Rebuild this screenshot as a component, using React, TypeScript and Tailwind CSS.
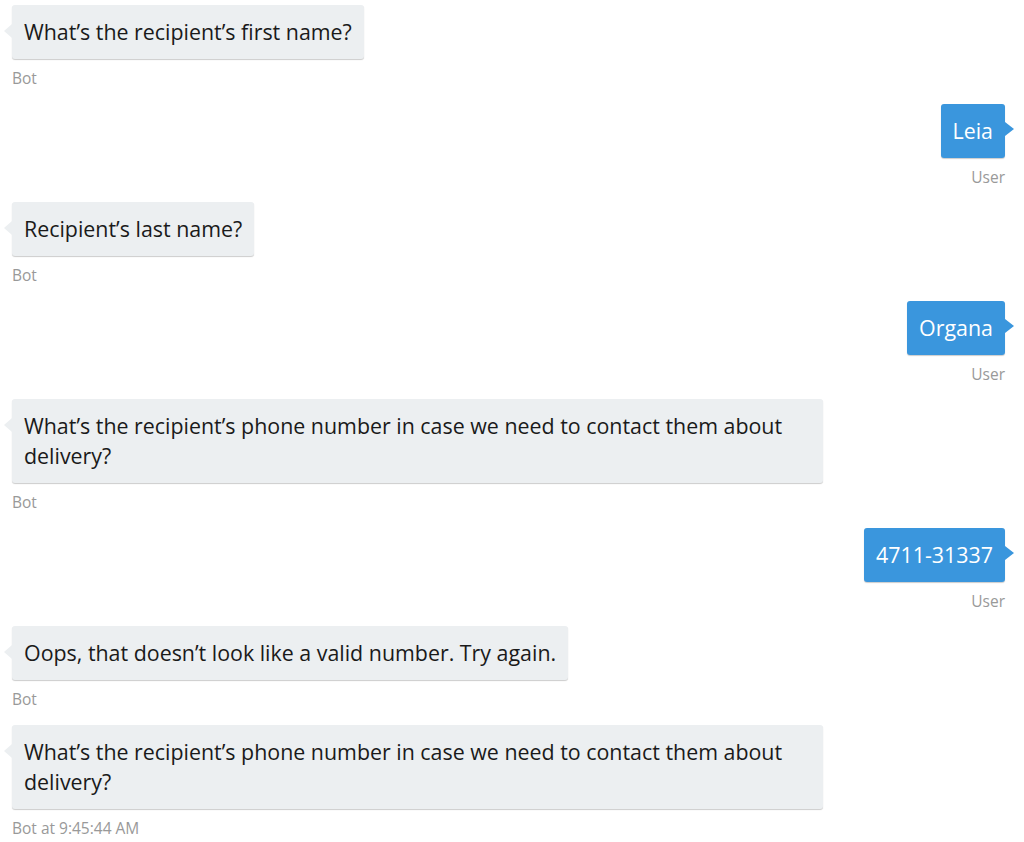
import React from 'react';

type Msg = { from: 'bot' | 'user'; text: string; label: string };

const MESSAGES: Msg[] = [
  { from: 'bot', text: 'What\u2019s the recipient\u2019s first name?', label: 'Bot' },
  { from: 'user', text: 'Leia', label: 'User' },
  { from: 'bot', text: 'Recipient\u2019s last name?', label: 'Bot' },
  { from: 'user', text: 'Organa', label: 'User' },
  {
    from: 'bot',
    text: 'What\u2019s the recipient\u2019s phone number in case we need to contact them about delivery?',
    label: 'Bot',
  },
  { from: 'user', text: '4711-31337', label: 'User' },
  { from: 'bot', text: 'Oops, that doesn\u2019t look like a valid number. Try again.', label: 'Bot' },
  {
    from: 'bot',
    text: 'What\u2019s the recipient\u2019s phone number in case we need to contact them about delivery?',
    label: 'Bot at 9:45:44 AM',
  },
];

function Callout({ side, color }: { side: 'left' | 'right'; color: string }) {
  return side === 'left' ? (
    <svg className="absolute top-[19px] -left-2 h-[14px] w-2" viewBox="0 0 8 14">
      <path d="M0 7 L8 0 V14 Z" fill={color} />
    </svg>
  ) : (
    <svg className="absolute top-[18px] -right-[9px] h-[14px] w-[9px]" viewBox="0 0 9 14">
      <path d="M9 7 L0 0 V14 Z" fill={color} />
    </svg>
  );
}

function Message({ msg }: { msg: Msg }) {
  const isBot = msg.from === 'bot';
  return (
    <div className={`flex flex-col ${isBot ? 'items-start' : 'items-end'}`}>
      <div
        className={`relative max-w-[811px] rounded-[3px] px-3 py-3 text-[21.4px] leading-[30px] shadow-[0_1px_1px_rgba(0,0,0,0.2)] ${
          isBot ? 'bg-[#eceff1] text-[#1a1a1a]' : 'bg-[#3a96dd] text-white'
        }`}
      >
        <Callout side={isBot ? 'left' : 'right'} color={isBot ? '#eceff1' : '#3a96dd'} />
        {msg.text}
      </div>
      <div className="mt-[9px] text-[15.5px] leading-[21.5px] text-[#999999]">{msg.label}</div>
    </div>
  );
}

export default function App() {
  return (
    <div
      className="min-h-[842px] bg-white px-3 pt-[5px]"
      style={{ fontFamily: '"Segoe UI", "Open Sans", sans-serif' }}
    >
      <div className="mx-auto flex max-w-[1000px] flex-col gap-[14px] pr-[7px]">
        {MESSAGES.map((m, i) => (
          <Message key={i} msg={m} />
        ))}
      </div>
    </div>
  );
}
